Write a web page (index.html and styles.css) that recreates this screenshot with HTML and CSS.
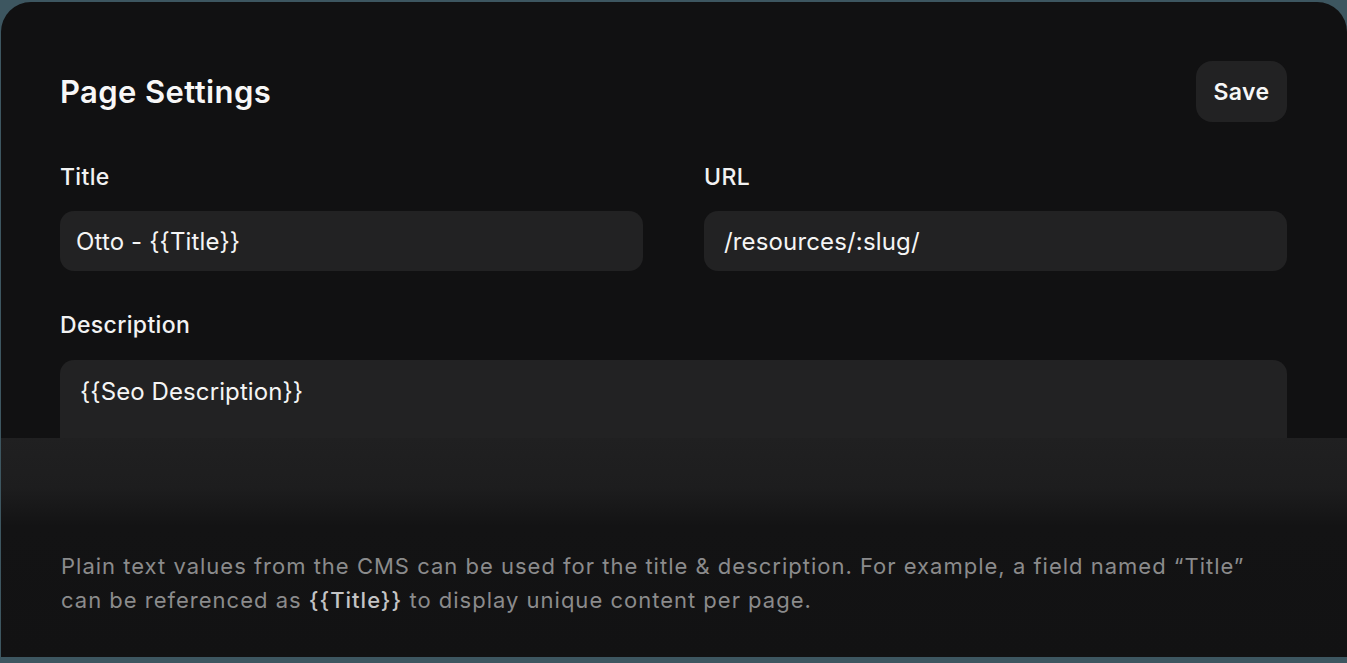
FILE: index.html
```html
<!DOCTYPE html>
<html lang="en">
<head>
<meta charset="utf-8">
<title>Page Settings</title>
<link rel="stylesheet" href="styles.css">
</head>
<body>
<div class="card">
  <div class="content">
    <div class="header">
      <h1 class="title">Page Settings</h1>
      <button class="save">Save</button>
    </div>
    <div class="row">
      <div class="field">
        <div class="label">Title</div>
        <div class="input">Otto - {{Title}}</div>
      </div>
      <div class="field">
        <div class="label">URL</div>
        <div class="input url">/resources/:slug/</div>
      </div>
    </div>
    <div class="field desc">
      <div class="label">Description</div>
      <div class="textarea">{{Seo Description}}</div>
    </div>
  </div>
  <div class="panel">
    <p class="note">Plain text values from the CMS can be used for the title &amp; description. For example, a field named “Title” can be referenced as <span class="hl">{{Title}}</span> to display unique content per page.</p>
  </div>
</div>
</body>
</html>
```
FILE: styles.css
```css
html, body {
  margin: 0;
  padding: 0;
}
body {
  background: #3d5660;
  padding: 2px 0 0 1px;
  height: 663px;
  box-sizing: border-box;
  overflow: hidden;
  font-family: Inter, "Noto Sans", sans-serif;
}
.card {
  background: #111112;
  border-radius: 30px 30px 0 0;
  height: 655px;
  overflow: hidden;
  display: flex;
  flex-direction: column;
}
.content {
  padding: 59px 60px 0 59px;
}
.header {
  display: flex;
  align-items: center;
  justify-content: space-between;
  height: 61px;
}
.title {
  margin: 0;
  font-size: 31px;
  font-weight: 600;
  color: #f7f7f7;
  letter-spacing: 0.4px;
}
.save {
  width: 91px;
  height: 61px;
  border: none;
  border-radius: 16px;
  background: #222223;
  color: #f7f7f7;
  font-family: inherit;
  font-size: 23px;
  font-weight: 600;
  letter-spacing: 0.4px;
  padding: 0;
}
.row {
  display: grid;
  grid-template-columns: 1fr 1fr;
  column-gap: 61px;
  margin-top: 42px;
}
.field {
  display: flex;
  flex-direction: column;
  gap: 21px;
}
.label {
  font-size: 23px;
  line-height: 26px;
  font-weight: 500;
  letter-spacing: 0.35px;
  color: #f2f2f2;
}
.input {
  height: 60px;
  border-radius: 14px;
  background: #222223;
  color: #f5f5f5;
  font-size: 24px;
  letter-spacing: 0.15px;
  display: flex;
  align-items: center;
  padding-left: 16px;
}
.input.url {
  padding-left: 20px;
}
.desc {
  margin-top: 41px;
  gap: 22px;
}
.textarea {
  height: 78px;
  box-sizing: border-box;
  border-radius: 14px 14px 0 0;
  background: #222223;
  color: #f5f5f5;
  font-size: 24px;
  letter-spacing: 0.1px;
  line-height: 28px;
  padding: 18px 20px;
}
.panel {
  flex: 1;
  background: linear-gradient(to bottom, #202021 0px, #1d1d1e 50px, #131314 88px, #121213 100%);
  padding: 111px 60px 0 60px;
}
.note {
  margin: 0;
  font-size: 22px;
  line-height: 34px;
  letter-spacing: 1px;
  color: #8b8b8c;
}
.hl {
  color: #c4c4c5;
  font-weight: 500;
}
```
